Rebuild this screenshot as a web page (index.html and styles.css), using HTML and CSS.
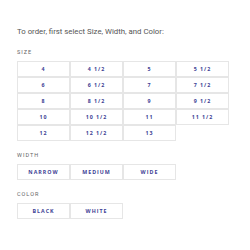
FILE: index.html
```html
<!DOCTYPE html>
<html lang="en">
<head>
    <meta charset="UTF-8">
    <title>Select options</title>
    <link rel="stylesheet" href="styles.css">
</head>
<body>
    <div class="opciones">
        <p class="intro">To order, first select Size, Width, and Color:</p>

        <div class="grupo">
            <h4>SIZE</h4>
            <div class="celdas">
                <button>4</button><button>4 1/2</button><button>5</button><button>5 1/2</button>
                <button>6</button><button>6 1/2</button><button>7</button><button>7 1/2</button>
                <button>8</button><button>8 1/2</button><button>9</button><button>9 1/2</button>
                <button>10</button><button>10 1/2</button><button>11</button><button>11 1/2</button>
                <button>12</button><button>12 1/2</button><button>13</button>
            </div>
        </div>

        <div class="grupo">
            <h4>WIDTH</h4>
            <div class="celdas">
                <button>NARROW</button><button>MEDIUM</button><button>WIDE</button>
            </div>
        </div>

        <div class="grupo">
            <h4>COLOR</h4>
            <div class="celdas">
                <button>BLACK</button><button>WHITE</button>
            </div>
        </div>
    </div>
</body>
</html>
```

FILE: styles.css
```css
body {
    margin: 0;
    padding: 0;
    background-color: #fff;
    font-family: Roboto, "Liberation Sans", sans-serif;
}
.opciones {
    padding: 26px 17px 0 17px;
}
.intro {
    margin: 0 0 10px 0;
    font-size: 7.8px;
    line-height: 12px;
    color: #555;
}
.grupo {
    margin-bottom: 10px;
}
.grupo h4 {
    margin: 0 0 5px 0;
    font-size: 5.5px;
    line-height: 8px;
    font-weight: normal;
    letter-spacing: 1px;
    color: #666;
}
.celdas {
    display: grid;
    grid-template-columns: repeat(4, 53px);
    grid-auto-rows: 16px;
}
.celdas button {
    box-sizing: border-box;
    margin: 0;
    padding: 0;
    background-color: #fff;
    border: 1px solid #e6e6e6;
    font-family: "Open Sans", sans-serif;
    font-size: 5.3px;
    font-weight: bold;
    letter-spacing: 1px;
    color: #3d3f95;
}
```
